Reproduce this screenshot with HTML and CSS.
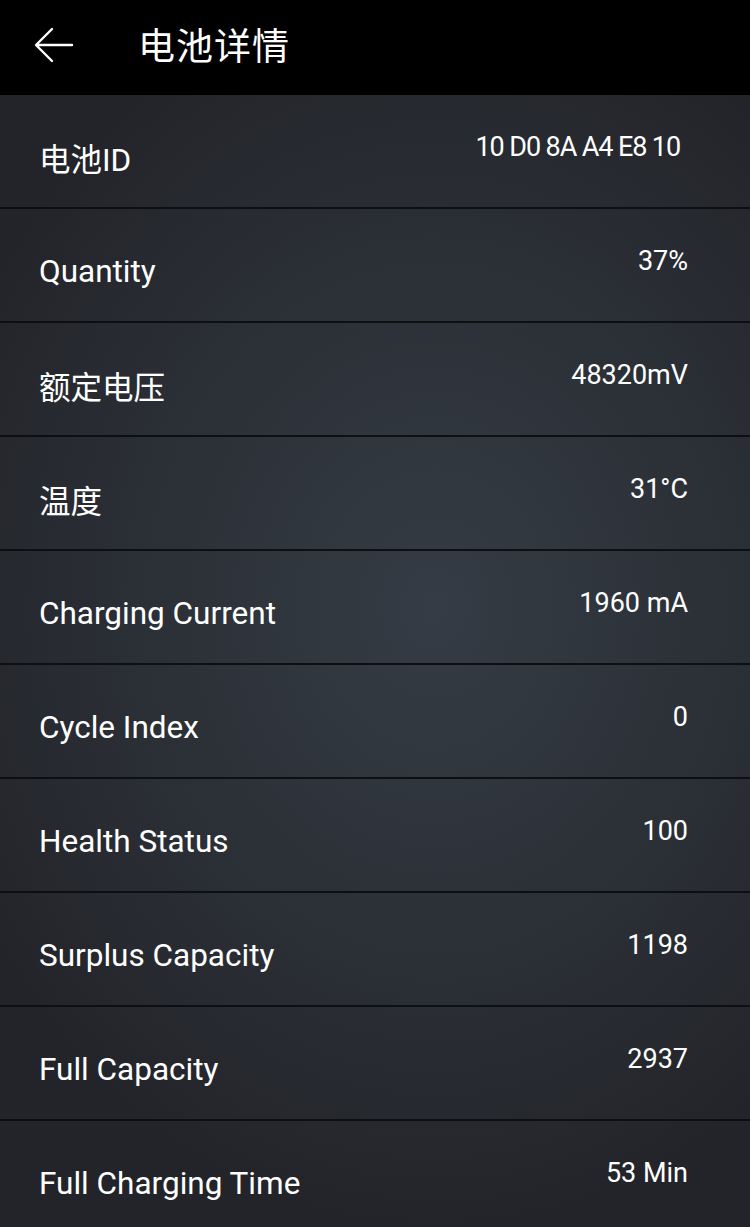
FILE: index.html
```html
<!DOCTYPE html>
<html>
<head>
  <meta charset="utf-8">
  <title>电池详情</title>
  <link rel="stylesheet" href="styles.css">
</head>
<body>
  <div class="app-bar">
    <svg class="back-icon" width="40" height="36" viewBox="0 0 40 36">
      <path d="M38 18 H3 M18 2 L2 18 L18 34" fill="none" stroke="#fff" stroke-width="2.4" stroke-linecap="round" stroke-linejoin="round"/>
    </svg>
    <span class="app-title">电池详情</span>
  </div>

  <div class="detail-list">
    <div class="detail-row">
      <span class="label">电池ID</span>
      <span class="value value-id">10 D0 8A A4 E8 10</span>
    </div>
    <div class="detail-row">
      <span class="label">Quantity</span>
      <span class="value">37%</span>
    </div>
    <div class="detail-row">
      <span class="label">额定电压</span>
      <span class="value">48320mV</span>
    </div>
    <div class="detail-row">
      <span class="label">温度</span>
      <span class="value">31°C</span>
    </div>
    <div class="detail-row">
      <span class="label">Charging Current</span>
      <span class="value">1960 mA</span>
    </div>
    <div class="detail-row">
      <span class="label">Cycle Index</span>
      <span class="value">0</span>
    </div>
    <div class="detail-row">
      <span class="label">Health Status</span>
      <span class="value">100</span>
    </div>
    <div class="detail-row">
      <span class="label">Surplus Capacity</span>
      <span class="value">1198</span>
    </div>
    <div class="detail-row">
      <span class="label">Full Capacity</span>
      <span class="value">2937</span>
    </div>
    <div class="detail-row">
      <span class="label">Full Charging Time</span>
      <span class="value">53 Min</span>
    </div>
  </div>
</body>
</html>
```

FILE: styles.css
```css
body {
  margin: 0;
  font-family: Roboto, "Noto Sans CJK SC", sans-serif;
  color: #fff;
  background-color: #222328;
  overflow: hidden;
}

.app-bar {
  height: 95px;
  background-color: #000;
  display: flex;
  align-items: center;
  padding-left: 34px;
}

.back-icon {
  display: block;
  margin-top: -5px;
}

.app-title {
  margin-left: 64px;
  margin-top: -8px;
  font-size: 37px;
  letter-spacing: 1px;
}

.detail-list {
  background: radial-gradient(ellipse 70% 55% at 58% 45%, #353c45 0%, #2c3138 50%, #232429 100%);
}

.detail-row {
  height: 112px;
  border-bottom: 2px solid #0e0f12;
  display: flex;
  align-items: center;
  justify-content: space-between;
  padding: 0 62px 0 39px;
}

.label {
  font-size: 31.5px;
  margin-top: 12px;
}

.value {
  font-size: 27px;
  margin-bottom: 8px;
}

.value-id {
  margin-right: 8px;
  letter-spacing: -1.1px;
}
```
